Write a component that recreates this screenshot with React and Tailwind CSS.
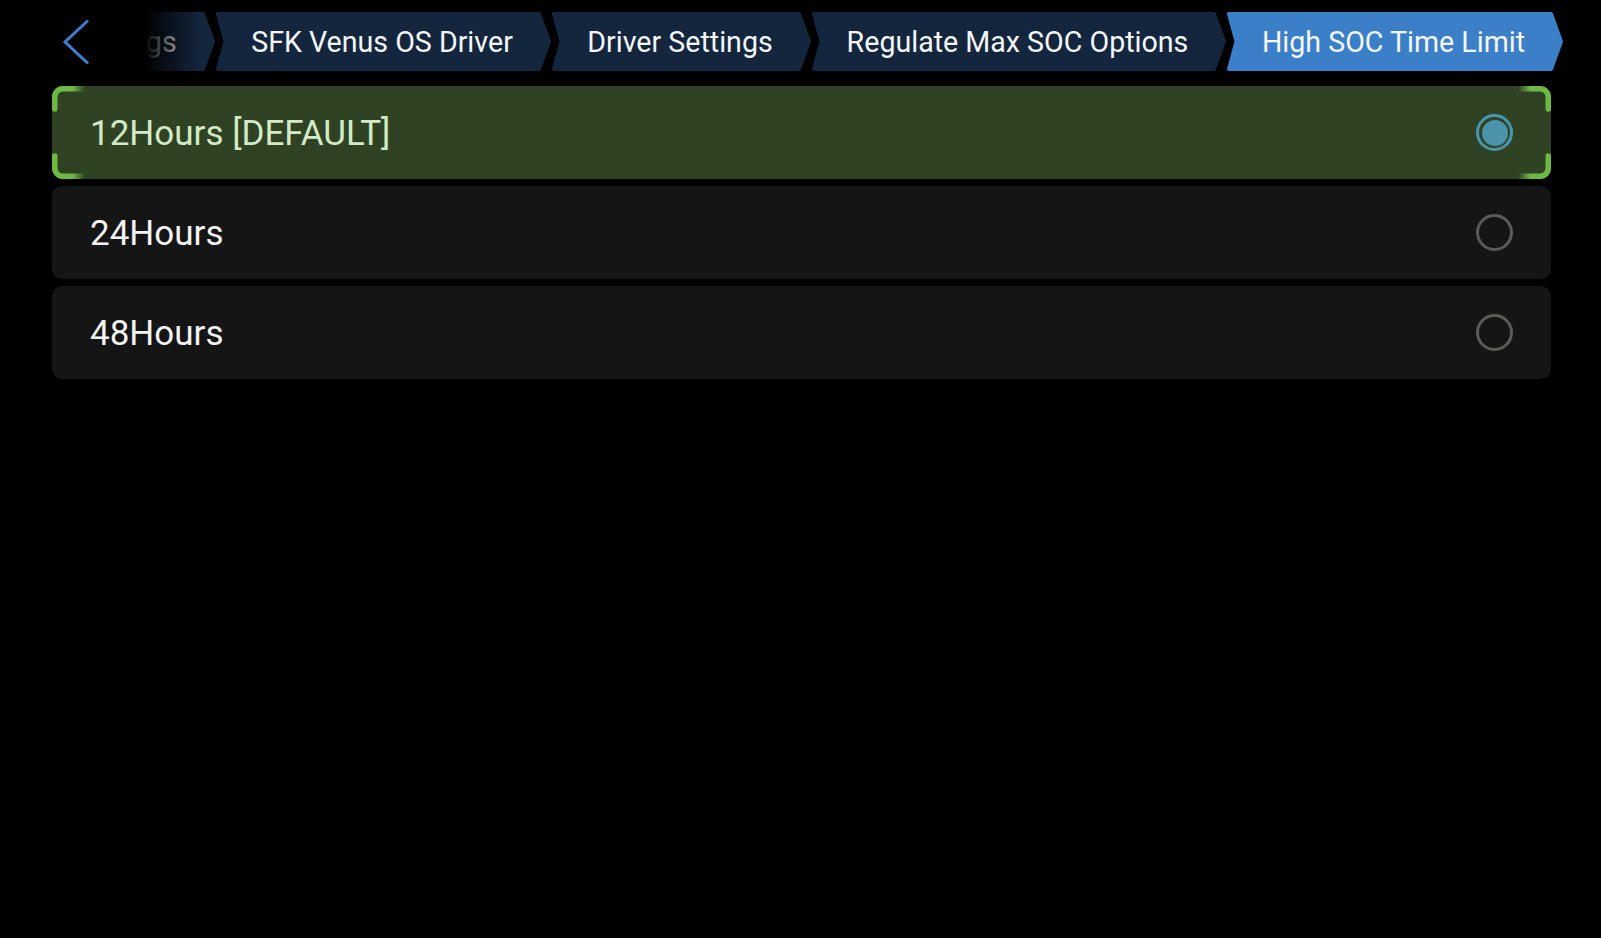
import React from "react";

const crumbs = [
  { label: "Settings", width: 179 },
  { label: "SFK Venus OS Driver", width: 336 },
  { label: "Driver Settings", width: 260 },
  { label: "Regulate Max SOC Options", width: 415 },
  { label: "High SOC Time Limit", width: 337, active: true },
];

const options = [
  { label: "12Hours [DEFAULT]", selected: true },
  { label: "24Hours" },
  { label: "48Hours" },
];

function Crumb({ label, width, active }) {
  const h = 59;
  const pts = `2,2 ${width - 13},2 ${width - 3},${h / 2} ${width - 13},${h - 2} 2,${h - 2} 9.5,${h / 2}`;
  const fill = active ? "#3b7fc9" : "#13263d";
  return (
    <div className="relative shrink-0 h-[59px] flex items-center justify-center pl-[8px] pr-[12px]" style={{ width }}>
      <svg className="absolute inset-0" width={width} height={h} viewBox={`0 0 ${width} ${h}`}>
        <polygon points={pts} fill={fill} stroke={fill} strokeWidth="4" strokeLinejoin="round" />
      </svg>
      <span className="relative text-[28.6px] text-[#f4f6f8] whitespace-nowrap leading-none translate-y-[1px]">{label}</span>
    </div>
  );
}

function Corner({ id, className }) {
  return (
    <svg className={"absolute " + className} width="34" height="27" viewBox="0 0 34 27">
      <defs>
        <linearGradient id={id} gradientUnits="userSpaceOnUse" x1="0" y1="0" x2="33" y2="0">
          <stop offset="0" stopColor="#6db944" />
          <stop offset="0.62" stopColor="#6db944" />
          <stop offset="1" stopColor="#6db944" stopOpacity="0" />
        </linearGradient>
      </defs>
      <path
        d="M2.75 23 V11 A8.25 8.25 0 0 1 11 2.75 H32"
        fill="none"
        stroke={`url(#${id})`}
        strokeWidth="5.5"
        strokeLinecap="round"
      />
    </svg>
  );
}

function Radio({ selected }) {
  if (selected) {
    return (
      <div className="w-[37px] h-[37px] rounded-full border-[3px] border-[#4a95ae] flex items-center justify-center">
        <div className="w-[26px] h-[26px] rounded-full bg-[#4a93ab]" />
      </div>
    );
  }
  return <div className="w-[37px] h-[37px] rounded-full border-[3px] border-[#5b5a56]" />;
}

export default function App() {
  return (
    <div className="w-[1601px] h-[938px] bg-black overflow-hidden" style={{ fontFamily: "Roboto, 'Liberation Sans', sans-serif" }}>
      {/* Header */}
      <div className="flex items-center h-[59px] mt-[12px]">
        <div className="w-[100px] shrink-0 pl-[62px] flex items-center">
          <svg width="28" height="46" viewBox="0 0 28 46">
            <polyline points="26,1.5 3,23 26,44.5" fill="none" stroke="#3a80d2" strokeWidth="3" />
          </svg>
        </div>
        <div className="relative flex-1 h-full overflow-hidden flex justify-end pr-[37px]">
          {crumbs.map((c) => (
            <Crumb key={c.label} {...c} />
          ))}
          <div className="absolute left-0 top-0 h-full w-[100px] bg-linear-to-r from-black from-[44%] to-transparent" />
        </div>
      </div>

      {/* Options */}
      <div className="mt-[15px] ml-[52px] w-[1499px] flex flex-col gap-[7px]">
        {options.map((o) =>
          o.selected ? (
            <div key={o.label} className="relative h-[93px] rounded-[10px] bg-[#2f4224] flex items-center justify-between pl-[38px] pr-[38px]">
              <span className="text-[35px] text-[#d3eac6] translate-y-[2px]">{o.label}</span>
              <Radio selected />
              <Corner id="c1" className="left-0 top-0" />
              <Corner id="c2" className="right-0 top-0 -scale-x-100" />
              <Corner id="c3" className="left-0 bottom-0 -scale-y-100" />
              <Corner id="c4" className="right-0 bottom-0 -scale-x-100 -scale-y-100" />
            </div>
          ) : (
            <div key={o.label} className="h-[93px] rounded-[10px] bg-[#151515] flex items-center justify-between pl-[38px] pr-[38px]">
              <span className="text-[35px] text-[#f3f3f3] translate-y-[2px]">{o.label}</span>
              <Radio />
            </div>
          )
        )}
      </div>
    </div>
  );
}
